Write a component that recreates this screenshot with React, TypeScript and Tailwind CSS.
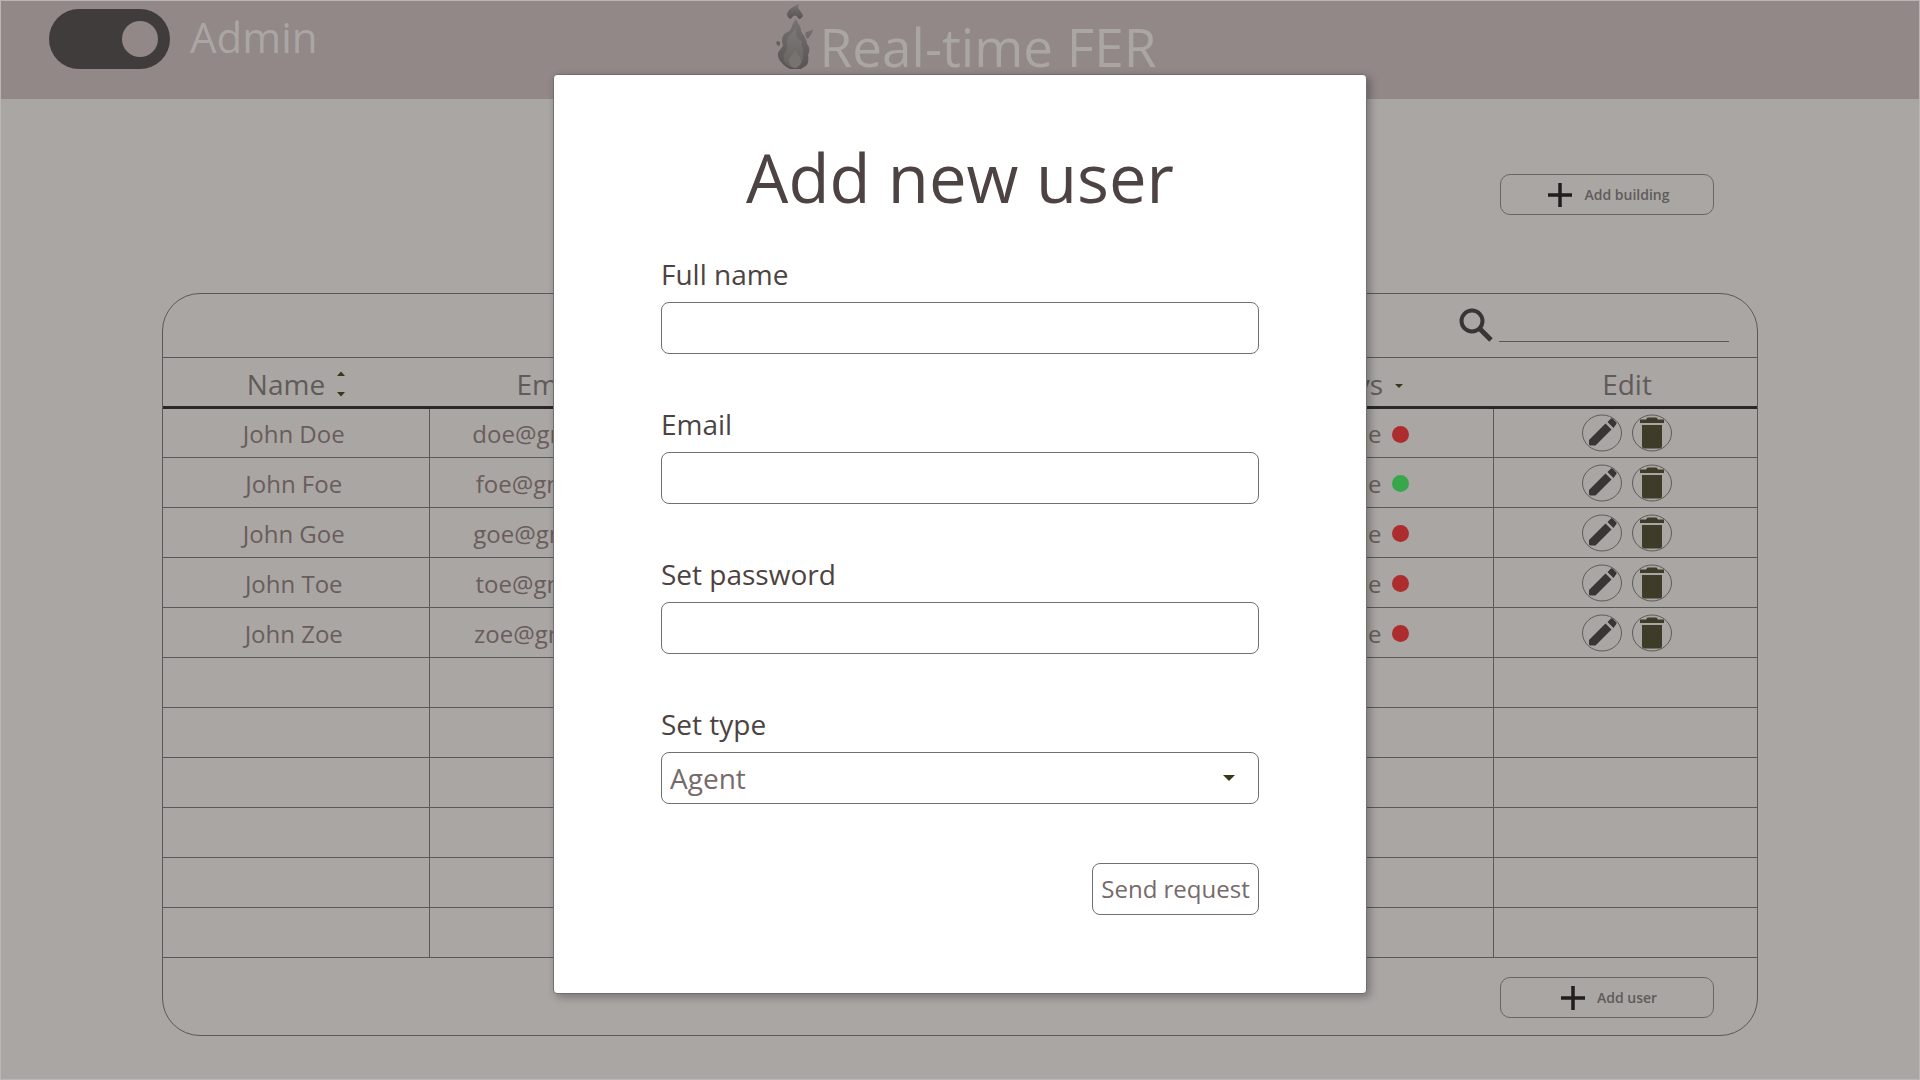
import type { ReactNode } from 'react';

type User = { name: string; email: string; online: boolean };

const users: User[] = [
  { name: 'John Doe', email: 'doe@gmail.com', online: false },
  { name: 'John Foe', email: 'foe@gmail.com', online: true },
  { name: 'John Goe', email: 'goe@gmail.com', online: false },
  { name: 'John Toe', email: 'toe@gmail.com', online: false },
  { name: 'John Zoe', email: 'zoe@gmail.com', online: false },
];

const emptyRows = [0, 1, 2, 3, 4, 5];

function Flame() {
  return (
    <svg viewBox="0 0 40 68" className="h-[68px] w-10 shrink-0" aria-hidden="true">
      <defs>
        <linearGradient id="flame-outer" x1="0" y1="0" x2="0" y2="1">
          <stop offset="0" stopColor="#777372" />
          <stop offset="1" stopColor="#575453" />
        </linearGradient>
        <linearGradient id="flame-inner" x1="0" y1="0" x2="0" y2="1">
          <stop offset="0" stopColor="#7c7876" />
          <stop offset="1" stopColor="#666361" />
        </linearGradient>
      </defs>
      <path d="M23 3 C20 8 26 10 27 15 C25 18 23 19 22 17 C20 13 17 14 15 18 C10 16 10 12 14 8 C17 6 20 4 23 3Z" fill="url(#flame-outer)" />
      <path d="M20 18 C22 23 25 25 25 30 C27 34 31 38 31 43 C34 46 34 50 32 54 C33 58 32 62 31 64 L25 68 L14 68 C8 65 3 60 2 55 C1 50 6 48 7 44 C5 39 6 34 11 31 C16 30 15 24 20 18Z" fill="url(#flame-outer)" />
      <path d="M20 26 C19 32 20 38 26 40 C25 45 28 48 27 53 C28 60 24 65 19 67 C11 66 6 60 8 53 C13 48 10 43 11 39 C13 33 17 32 20 26Z" fill="url(#flame-inner)" />
      <path d="M20 48 C20 54 26 55 25 61 C24 65 21 67 19 67 C15 66 13 63 13 59 C13 55 18 54 20 48Z" fill="#777371" />
      <path d="M37 28 C36 32 35 34 32 38 C29 36 29 34 30 31 C33 30 35 30 37 28Z" fill="#716d6b" />
      <path d="M1 40 L4 41 L4 44 L2 45 L0 42Z" fill="#64605f" />
    </svg>
  );
}

function SearchIcon() {
  return (
    <svg viewBox="0 0 34 34" className="size-[34px] shrink-0" fill="none" stroke="#393534" aria-hidden="true">
      <circle cx="13" cy="13" r="10.500" strokeWidth="4" />
      <path d="M20 20 L32 32" strokeWidth="5" />
    </svg>
  );
}

function PencilIcon() {
  return (
    <svg viewBox="0 0 40 38" className="h-[38px] w-10" aria-hidden="true">
      <ellipse cx="20" cy="19" rx="19.5" ry="18" fill="none" stroke="#605b5a" />
      <path d="M7 26 L23.500 9.500 L29.500 15.500 L13.500 31.500 H8.500 Q7 31.500 7 30Z" fill="#393534" />
      <path d="M25.500 8 L29 4.500 Q30 4 31 5 L34.500 8.500 Q35 9.500 34 10.500 L31.500 14Z" fill="#393534" />
    </svg>
  );
}

function TrashIcon() {
  return (
    <svg viewBox="0 0 40 38" className="h-[38px] w-10" aria-hidden="true">
      <ellipse cx="20" cy="19" rx="19.5" ry="18" fill="none" stroke="#605b5a" />
      <path d="M8 5.500 H14 L15.500 3.500 H24.500 L26 5.500 H32 V9 H8Z" fill="#3e3b28" />
      <path d="M10 11 H30 V32 Q30 34.500 27.500 34.500 H12.500 Q10 34.500 10 32Z" fill="#3e3b28" />
    </svg>
  );
}

function PlusIcon() {
  return (
    <svg viewBox="0 0 24 24" className="size-6 shrink-0" stroke="#211e1d" strokeWidth="3.5" aria-hidden="true">
      <path d="M12 0 V24 M0 12 H24" />
    </svg>
  );
}

function CaretDown({ className }: { className: string }) {
  return (
    <svg viewBox="0 0 12 6" className={className} fill="#3a3718" aria-hidden="true">
      <path d="M0 0 H12 L6 6Z" />
    </svg>
  );
}

function SortIcon() {
  return (
    <svg viewBox="0 0 8 26" className="h-[26px] w-2" fill="#3a3718" aria-hidden="true">
      <path d="M0 5 L4 0.500 L8 5Z M0 21 L4 25.500 L8 21Z" />
    </svg>
  );
}

function AddButton({ children }: { children: ReactNode }) {
  return (
    <button
      type="button"
      className="flex h-[41px] w-[214px] items-center justify-center gap-3 rounded-[10px] border border-[#6b6665] pl-1 text-sm font-semibold text-[#605b5a]"
    >
      <PlusIcon />
      {children}
    </button>
  );
}

function Field({ id, label, type }: { id: string; label: string; type: string }) {
  return (
    <div className="flex flex-col gap-2">
      <label htmlFor={id} className="text-[28px] leading-10">
        {label}
      </label>
      <input id={id} type={type} className="h-[52px] w-full rounded-lg border border-[#707070] bg-white px-2 text-[28px] outline-none" />
    </div>
  );
}

function UserTable() {
  return (
    <table className="w-full table-fixed border-collapse text-center">
      <thead>
        <tr className="h-[50px] border-t border-b-3 border-t-[#5c5857] border-b-[#2a2726] text-[28px] leading-10 text-[#605b5a]">
          <th className="p-0 pt-1 font-normal">
            <div className="flex items-center justify-center gap-3">
              Name
              <SortIcon />
            </div>
          </th>
          <th className="p-0 pt-1 font-normal">
            <div className="flex items-center justify-center gap-3">
              Email
              <SortIcon />
            </div>
          </th>
          <th className="p-0 pt-1 font-normal" />
          <th className="p-0 pt-1 font-normal" />
          <th className="p-0 pt-1 font-normal">
            <div className="flex items-center justify-end gap-3 pr-[90px]">
              Days
              <CaretDown className="mt-1 h-1 w-2" />
            </div>
          </th>
          <th className="w-[264px] p-0 pt-1 pl-1 font-normal">Edit</th>
        </tr>
      </thead>
      <tbody className="divide-y divide-[#5c5857] border-b border-[#5c5857] text-2xl leading-8 text-[#695d5c]">
        {users.map((user) => (
          <tr key={user.name} className="h-[50px] divide-x divide-[#5c5857]">
            <td className="p-0 pt-0.5 pr-1">{user.name}</td>
            <td className="p-0 pt-0.5">{user.email}</td>
            <td className="p-0" />
            <td className="p-0" />
            <td className="p-0 pt-0.5">
              <div className="flex items-center justify-end gap-2.5 pr-[84px]">
                {user.online ? 'Online' : 'Offline'}
                <span className={user.online ? 'size-[17px] rounded-full bg-[#38a74c]' : 'size-[17px] rounded-full bg-[#ad2d2e]'} />
              </div>
            </td>
            <td className="p-0 pl-1">
              <div className="flex items-center justify-center gap-2.5">
                <button type="button" aria-label={`Edit ${user.name}`}>
                  <PencilIcon />
                </button>
                <button type="button" aria-label={`Delete ${user.name}`}>
                  <TrashIcon />
                </button>
              </div>
            </td>
          </tr>
        ))}
        {emptyRows.map((row) => (
          <tr key={row} className="h-[50px] divide-x divide-[#5c5857]">
            <td />
            <td />
            <td />
            <td />
            <td />
            <td />
          </tr>
        ))}
      </tbody>
    </table>
  );
}

function AddUserDialog() {
  return (
    <form
      role="dialog"
      aria-labelledby="dialog-title"
      className="mt-[73px] flex w-full max-w-[814px] flex-col rounded border border-[#707070] bg-white px-[107px] pt-[60px] pb-[78px] text-[#4c4342] shadow-[3px_3px_8px_rgba(0,0,0,0.3)]"
    >
      <h2 id="dialog-title" className="text-center text-[67px] leading-[84px]">
        Add new user
      </h2>
      <div className="mt-[35px] flex flex-col gap-[50px]">
        <Field id="full-name" label="Full name" type="text" />
        <Field id="email" label="Email" type="email" />
        <Field id="password" label="Set password" type="password" />
        <div className="flex flex-col gap-2">
          <label htmlFor="user-type" className="text-[28px] leading-10">
            Set type
          </label>
          <div className="relative">
            <select
              id="user-type"
              className="h-[52px] w-full appearance-none rounded-lg border border-[#707070] bg-white px-2 text-[28px] text-[#756b6a] outline-none"
            >
              <option>Agent</option>
            </select>
            <CaretDown className="pointer-events-none absolute top-[23px] right-6 h-1.5 w-3" />
          </div>
        </div>
      </div>
      <button type="submit" className="mt-[59px] h-[52px] w-[167px] self-end rounded-lg border border-[#707070] text-2xl text-[#756b6a]">
        Send request
      </button>
    </form>
  );
}

export default function App() {
  return (
    <div className="relative min-h-screen border border-[#b9b6b5] bg-[#aaa6a4] font-['Open_Sans',sans-serif]">
      <header className="grid h-[98px] grid-cols-3 items-start bg-[#918887] text-[#aaa6a4]">
        <div className="flex items-start gap-5 pt-2 pl-12">
          <label className="flex h-[60px] w-[121px] cursor-pointer items-center justify-end rounded-full bg-[#403c3b] px-3">
            <input type="checkbox" role="switch" defaultChecked aria-label="Admin mode" className="size-9 appearance-none rounded-full bg-[#918887]" />
          </label>
          <span className="text-[42px] leading-[56px]">Admin</span>
        </div>
        <h1 className="flex items-start justify-center gap-1 pl-3 text-[53px] leading-[92px] whitespace-nowrap">
          <Flame />
          Real-time FER
        </h1>
      </header>

      <main className="mx-auto w-10/12 max-w-[1596px] pt-[75px]">
        <div className="flex justify-end pr-11">
          <AddButton>Add building</AddButton>
        </div>
        <section className="mt-[78px] rounded-[38px] border border-[#5c5857]">
          <div className="flex h-[63px] items-start justify-end gap-1.5 pt-3.5 pr-7">
            <label htmlFor="search" aria-label="Search">
              <SearchIcon />
            </label>
            <input id="search" type="search" className="h-[34px] w-[230px] border-b border-[#5c5857] bg-transparent text-xl outline-none" />
          </div>
          <UserTable />
          <div className="flex justify-end pt-[19px] pr-[43px] pb-[17px]">
            <AddButton>Add user</AddButton>
          </div>
        </section>
      </main>

      <div className="absolute inset-0 flex items-start justify-center">
        <AddUserDialog />
      </div>
    </div>
  );
}
